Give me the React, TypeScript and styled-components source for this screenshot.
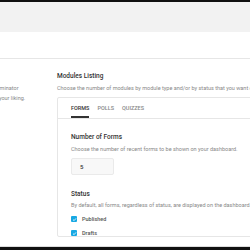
import styled, { createGlobalStyle } from "styled-components";

const Global = createGlobalStyle`
  html, body {
    margin: 0;
    padding: 0;
    width: 250px;
    height: 250px;
    overflow: hidden;
    background: #fff;
    font-family: Roboto, "Liberation Sans", sans-serif;
  }
`;

const Page = styled.div`
  width: 250px;
  height: 250px;
  display: flex;
  flex-direction: column;
  overflow: hidden;
`;

const Frame = styled.div<{ h: number }>`
  height: ${(p) => p.h}px;
  flex: none;
  background: #111;
`;

const Header = styled.div`
  height: 30px;
  flex: none;
  background: #f2f2f2;
`;

const SubHeader = styled.div`
  height: 26px;
  flex: none;
  background: #fff;
  border-bottom: 1px solid #e6e6e6;
`;

const Main = styled.div`
  flex: 1;
  display: flex;
  overflow: hidden;
  border-bottom: 1px solid #ddd;
`;

const Side = styled.div`
  width: 57px;
  flex: none;
  overflow: hidden;
  padding-top: 13px;
`;

const SideInner = styled.div`
  margin-left: -45px;
  white-space: nowrap;
`;

const Content = styled.div`
  width: 320px;
  flex: none;
  padding-top: 13px;
`;

const Title = styled.div`
  font-size: 6.5px;
  line-height: 8px;
  font-weight: 500;
  color: #333;
  white-space: nowrap;
`;

const Desc = styled.div<{ mt?: number }>`
  font-size: 5.5px;
  line-height: 8px;
  color: #888;
  margin-top: ${(p) => p.mt ?? 4}px;
  white-space: nowrap;
`;

const Card = styled.div`
  margin-top: 5px;
  border: 1px solid #e6e6e6;
  border-radius: 2px;
  background: #fff;
`;

const Tabs = styled.div`
  display: flex;
  gap: 8px;
  padding: 0 13px;
  height: 20px;
  border-bottom: 1px solid #e6e6e6;
`;

const Tab = styled.div<{ active?: boolean }>`
  display: flex;
  align-items: center;
  font-size: 5.5px;
  font-weight: 500;
  color: ${(p) => (p.active ? "#333" : "#888")};
  box-shadow: ${(p) => (p.active ? "inset 0 -2px 0 #333" : "none")};
`;

const Body = styled.div`
  padding: 14px 13px 0;
`;

const Input = styled.div`
  margin-top: 5px;
  width: 43px;
  height: 17px;
  box-sizing: border-box;
  padding-left: 8px;
  display: flex;
  align-items: center;
  background: #f8f8f8;
  border: 1px solid #eaeaea;
  border-radius: 2px;
  font-size: 6px;
  font-weight: 500;
  color: #333;
`;

const Section = styled.div`
  margin-top: 15px;
`;

const CheckRow = styled.label<{ mt: number }>`
  display: flex;
  align-items: center;
  gap: 5px;
  margin-top: ${(p) => p.mt}px;
  font-size: 5.5px;
  font-weight: 500;
  color: #555;
`;

const Box = styled.span`
  width: 6px;
  height: 6px;
  border-radius: 1px;
  background: #17a8e3;
  display: flex;
  align-items: center;
  justify-content: center;
`;

const Check = ({ label, mt }: { label: string; mt: number }) => (
  <CheckRow mt={mt}>
    <Box>
      <svg width="5" height="5" viewBox="0 0 10 10">
        <path d="M2 5.2 L4.2 7.3 L8 2.8" stroke="#fff" strokeWidth="1.6" fill="none" />
      </svg>
    </Box>
    {label}
  </CheckRow>
);

export default function App() {
  return (
    <Page>
      <Global />
      <Frame h={2} />
      <Header />
      <SubHeader />
      <Main>
        <Side>
          <SideInner>
            <Title>Dashboard</Title>
            <Desc>Customize the Forminator</Desc>
            <Desc mt={2}>dashboard as per your liking.</Desc>
          </SideInner>
        </Side>
        <Content>
          <Title>Modules Listing</Title>
          <Desc>Choose the number of modules by module type and/or by status that you want displayed on the dashboard.</Desc>
          <Card>
            <Tabs>
              <Tab active>FORMS</Tab>
              <Tab>POLLS</Tab>
              <Tab>QUIZZES</Tab>
            </Tabs>
            <Body>
              <Title>Number of Forms</Title>
              <Desc>Choose the number of recent forms to be shown on your dashboard.</Desc>
              <Input>5</Input>
              <Section>
                <Title>Status</Title>
                <Desc mt={3}>By default, all forms, regardless of status, are displayed on the dashboard. Use this option to filter.</Desc>
                <Check label="Published" mt={7} />
                <Check label="Drafts" mt={8} />
              </Section>
            </Body>
          </Card>
        </Content>
      </Main>
      <Frame h={3} />
    </Page>
  );
}
